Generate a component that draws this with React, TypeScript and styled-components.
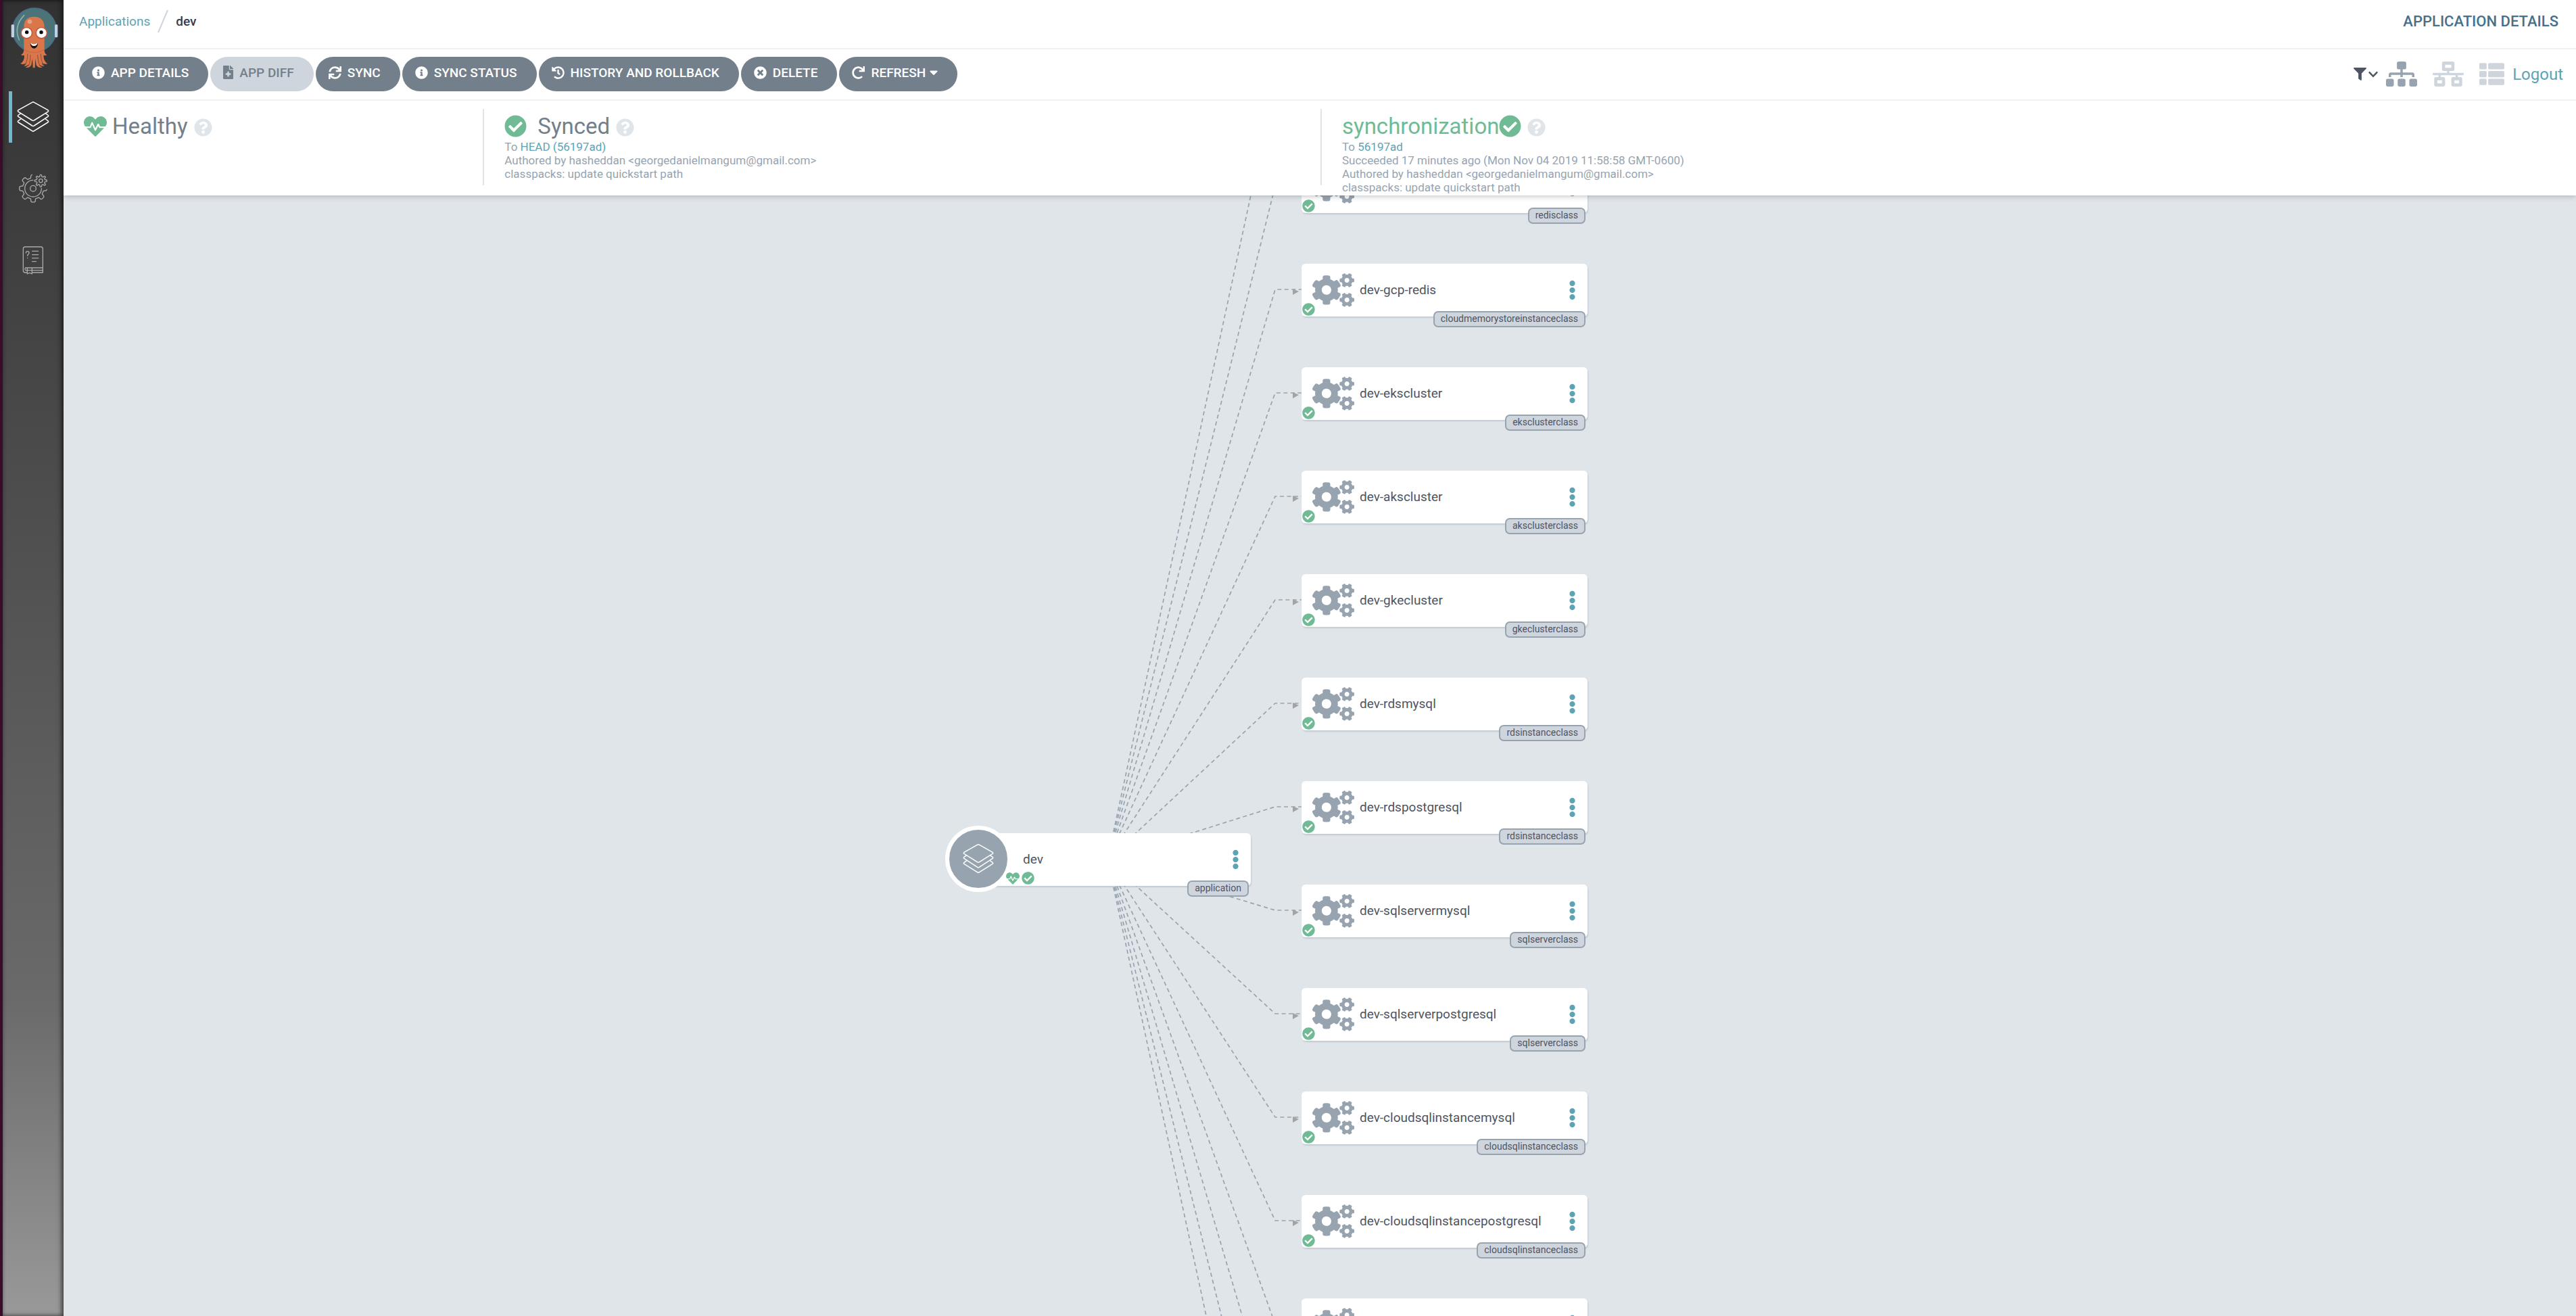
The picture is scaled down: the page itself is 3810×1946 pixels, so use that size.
import React from 'react';
import styled, { createGlobalStyle } from 'styled-components';
import {
  FaCaretDown,
  FaCheckCircle,
  FaChevronDown,
  FaCogs,
  FaEllipsisV,
  FaFileMedical,
  FaFilter,
  FaHeartbeat,
  FaHistory,
  FaInfoCircle,
  FaNetworkWired,
  FaQuestionCircle,
  FaRedo,
  FaSitemap,
  FaSync,
  FaThList,
  FaTimesCircle,
} from 'react-icons/fa';

const color = {
  ink: '#363c4a',
  text: '#4e5462',
  slate: '#73808c',
  steel: '#97a4b0',
  mist: '#ced5dc',
  canvas: '#e0e5e9',
  line: '#edf2f6',
  teal: '#5ea3b4',
  navy: '#44718e',
  green: '#70bb95',
};

const GlobalStyle = createGlobalStyle`
  *, *::before, *::after { box-sizing: border-box; }
  body {
    margin: 0;
    font-family: Roboto, "Liberation Sans", sans-serif;
    font-size: 19px;
    color: ${color.text};
    background: ${color.canvas};
  }
  a { color: ${color.teal}; text-decoration: none; }
  button { font: inherit; border: 0; padding: 0; background: none; cursor: pointer; }
  svg { display: block; flex: none; }
`;

/* ---------- shell ---------- */

const Shell = styled.div`
  display: flex;
  height: 100vh;
  overflow: hidden;
`;

const Sidebar = styled.nav`
  flex: none;
  width: 94px;
  border-left: 4px solid #3a0c29;
  background: linear-gradient(to bottom, #323232 0%, #434343 24%, #6a6a6a 76%, #999 100%);
  box-shadow: inset -3px 0 7px rgba(0, 0, 0, 0.55), inset 0 0 5px rgba(0, 0, 0, 0.25);
  display: flex;
  flex-direction: column;
  gap: 30px;
`;

const LogoBox = styled.a`
  display: flex;
  justify-content: center;
  height: 105px;
  padding: 10px 0 0 4px;
`;

const NavItem = styled.a<{ $active?: boolean }>`
  display: flex;
  align-items: center;
  justify-content: center;
  height: 76px;
  margin-left: 9px;
  padding-right: 14px;
  border-left: 5px solid ${(p) => (p.$active ? '#6fb9cf' : 'transparent')};
  color: ${(p) => (p.$active ? '#fff' : '#a9a9a9')};
`;

const Main = styled.div`
  flex: 1;
  min-width: 0;
  display: flex;
  flex-direction: column;
`;

const Glyph = styled.span<{ $w: number; $h: number }>`
  flex: none;
  display: block;
  width: ${(p) => p.$w}px;
  height: ${(p) => p.$h}px;

  svg { width: 100%; height: 100%; }
`;

/* ---------- header ---------- */

const Header = styled.header`
  position: relative;
  z-index: 2;
  background: #fff;
  box-shadow: 0 1px 8px rgba(60, 75, 85, 0.35);
`;

const TopBar = styled.div`
  display: flex;
  align-items: center;
  justify-content: space-between;
  height: 73px;
  padding: 0 26px 8px 23px;
  border-bottom: 2px solid ${color.line};
`;

const Breadcrumbs = styled.div`
  display: flex;
  align-items: center;
  gap: 11px;
  line-height: 24px;
`;

const Current = styled.span`
  font-weight: 500;
  color: ${color.ink};
`;

const PageTitle = styled.h1`
  margin: 0;
  font-size: 22px;
  line-height: 24px;
  font-weight: 500;
  color: ${color.navy};
  text-transform: uppercase;
`;

const Toolbar = styled.div`
  display: flex;
  align-items: center;
  justify-content: space-between;
  height: 76px;
  padding: 0 19px 1px 23px;
  border-bottom: 2px solid ${color.line};
`;

const Actions = styled.div`
  display: flex;
  gap: 3px;
`;

const ActionButton = styled.button`
  display: flex;
  align-items: center;
  gap: 9px;
  height: 51px;
  padding: 0 29px 5px 19px;
  border-radius: 26px;
  background: ${color.slate};
  color: #fff;
  font-weight: 500;
  white-space: nowrap;

  &:disabled {
    background: ${color.mist};
    color: ${color.slate};
  }
`;

const WithCaret = styled.span`
  display: flex;
  align-items: center;
  gap: 6px;
`;

const Views = styled.div`
  display: flex;
  align-items: center;
`;

const FilterButton = styled.button`
  display: flex;
  align-items: center;
  gap: 2px;
  margin-right: 11px;
  color: ${color.text};
`;

const ViewButton = styled.button<{ $active?: boolean; $gap: number }>`
  margin-right: ${(p) => p.$gap}px;
  color: ${(p) => (p.$active ? color.steel : color.mist)};
`;

const Logout = styled.a`
  font-size: 24px;
  line-height: 28px;
`;

const StatusBar = styled.div`
  display: grid;
  grid-template-columns: 1fr 2fr 3fr;
  padding: 12px 0 15px;
`;

const StatusColumn = styled.section<{ $divided?: boolean }>`
  height: 113px;
  padding: 5px 30px 0;
  margin-left: ${(p) => (p.$divided ? 1 : 0)}px;
  border-left: ${(p) => (p.$divided ? `2px solid ${color.canvas}` : '0')};
  font-size: 17px;
  line-height: 20px;
  color: ${color.steel};
  white-space: nowrap;
`;

const StatusTitle = styled.h2<{ $tone?: 'good' }>`
  display: flex;
  align-items: center;
  margin: 0;
  height: 41px;
  font-size: 33px;
  line-height: 41px;
  font-weight: 400;
  color: ${(p) => (p.$tone === 'good' ? color.green : color.slate)};
`;

const Good = styled.span<{ $gap: number }>`
  margin-right: ${(p) => p.$gap}px;
  color: ${color.green};
`;

const Help = styled.button`
  margin: 4px 0 0 9px;
  color: ${color.canvas};
`;

/* ---------- resource tree ---------- */

const Canvas = styled.main`
  position: relative;
  flex: 1;
  min-height: 0;
  overflow: hidden;
`;

const Edges = styled.svg`
  position: absolute;
  inset: 0;
  width: 100%;
  height: 100%;
`;

const Node = styled.article`
  position: absolute;
  width: 423px;
  height: 78px;
  display: flex;
  align-items: center;
  padding: 0 17px 0 16px;
  border-radius: 6px;
  background: #fff;
  box-shadow: 1px 2px 2px rgba(150, 165, 178, 0.4);
`;

const NodeName = styled.span<{ $indent: number }>`
  flex: 1;
  padding-left: ${(p) => p.$indent}px;
  line-height: 24px;
  white-space: nowrap;
`;

const Marks = styled.span<{ $left: number }>`
  position: absolute;
  left: ${(p) => p.$left}px;
  bottom: 1px;
  display: flex;
  gap: 3px;
  color: ${color.green};
`;

const Kind = styled.span`
  position: absolute;
  right: 3px;
  bottom: -16px;
  height: 24px;
  padding: 0 9px;
  border: 2px solid ${color.steel};
  border-radius: 7px;
  background: ${color.mist};
  font-size: 14px;
  line-height: 19px;
`;

const MenuButton = styled.button`
  color: ${color.teal};
`;

const Disc = styled.span`
  position: absolute;
  left: -29px;
  top: -11px;
  width: 98px;
  height: 98px;
  display: flex;
  align-items: center;
  justify-content: center;
  border: 6px solid #fff;
  border-radius: 50%;
  background: ${color.steel};
  color: #fff;
`;

/* ---------- drawings ---------- */

const LayersIcon = ({ size }: { size: number }) => (
  <svg width={size} height={size} viewBox="75 450 144 144" fill="none" stroke="currentColor" strokeWidth="4.5" strokeLinejoin="round" strokeLinecap="round">
    <path d="M143 457q4-3 8 0L212 491q6 4 0 8L151 537q-4 3-8 0L82 499q-6-4 0-8Z" />
    <path d="M92 506L82 513q-6 4 0 8L143 561q4 3 8 0L212 521q6-4 0-8L202 506" />
    <path d="M92 531L82 538q-6 4 0 8L143 584q4 3 8 0L212 546q6-4 0-8L202 531" />
  </svg>
);

const gear = (cx: number, cy: number, root: number, tip: number, teeth: number, from: number, to: number) => {
  const step = (Math.PI * 2) / teeth;
  const at = (r: number, a: number) => `${(cx + r * Math.cos(a)).toFixed(1)} ${(cy + r * Math.sin(a)).toFixed(1)}`;
  const points: string[] = [];
  for (let i = from; i <= to; i++) {
    const a = i * step;
    if (i !== from) points.push(at(root, a - step * 0.3), at(tip - 2, a - step * 0.2), at(tip, a - step * 0.1));
    if (i !== to) points.push(at(tip, a + step * 0.1), at(tip - 2, a + step * 0.2), at(root, a + step * 0.3));
  }
  return `M${points.join('L')}`;
};

const GearsIcon = () => (
  <svg width="44" height="44" viewBox="81 773 132 132" fill="none" stroke="currentColor" strokeWidth="4" strokeLinejoin="round" strokeLinecap="round">
    <path d={gear(147, 838, 47, 61, 8, 0, 6)} />
    <path d="M147 801A37 37 0 1 0 184 838" />
    <circle cx="147" cy="838" r="13" />
    <path d={`${gear(181, 804, 19, 27, 8, 0, 8)}Z`} />
    <circle cx="181" cy="804" r="8" />
  </svg>
);

const BookIcon = () => (
  <svg width="34" height="44" viewBox="99 1090 102 132" fill="none" stroke="currentColor" strokeWidth="4" strokeLinejoin="round" strokeLinecap="round">
    <path d="M124 1210H114q-8 0-8-9V1105q0-9 9-9H184q9 0 9 9V1210H146" />
    <path d="M193 1189H117q-3 0-3 5t3 6H193M146 1200H190M124 1191V1216L134 1211L145 1216V1191" />
    <path d="M146 1115H173M146 1131H173M146 1146H173M146 1161H163" />
    <path d="M118 1123q0-7 7-7t7 7q0 5-7 9v4M125 1145v1" />
  </svg>
);

const Mascot = () => (
  <svg width="72" height="92" viewBox="44 31 216 276">
    <circle cx="152" cy="134" r="97" fill="#4b7378" stroke="#4a6c8a" strokeWidth="4" />
    <path d="M106 69Q58 118 84 178" fill="none" stroke="#8fb0ae" strokeWidth="5" strokeLinecap="round" />
    <rect x="49" y="110" width="13" height="57" rx="4" fill="#c0d0e6" />
    <rect x="242" y="110" width="13" height="57" rx="4" fill="#c0d0e6" />
    <path
      fill="#d9774b"
      d="M105 122Q105 75 150 75T196 122V215Q194 240 208 245Q200 249 192 246Q192 272 210 284Q198 288 184 280Q186 290 196 294Q184 298 173 286Q176 296 187 300Q168 304 160 290L156 262L154 302H145L143 262L138 290Q130 304 112 300Q124 296 126 286Q116 298 104 293Q114 290 116 280Q102 290 90 283Q108 272 107 246Q99 249 92 244Q106 240 105 215Z"
    />
    <path d="M105 220Q150 248 196 220" fill="none" stroke="#c66a45" strokeWidth="4" />
    <path d="M121 240Q122 270 110 288M134 244Q134 276 126 294M166 244Q168 276 176 294M180 240Q180 270 192 288" fill="none" stroke="#8f4a35" strokeWidth="3" />
    <circle cx="131" cy="97" r="10" fill="#e6a184" />
    <circle cx="117" cy="147" r="27" fill="#c8573b" />
    <circle cx="183" cy="147" r="27" fill="#c8573b" />
    <circle cx="117" cy="147" r="22" fill="#fff" />
    <circle cx="183" cy="147" r="22" fill="#fff" />
    <circle cx="118" cy="144" r="8" fill="#000" />
    <circle cx="182" cy="144" r="8" fill="#000" />
    <path d="M133 191Q150 203 167 191Q166 216 150 216T133 191Z" fill="#1d0f0c" />
    <path d="M134 191Q150 203 166 191Q163 205 150 205T134 191Z" fill="#fff" />
  </svg>
);

const Slash = () => (
  <svg width="16" height="36" viewBox="0 0 16 36" stroke={color.mist} strokeWidth="2">
    <path d="M1 34L15 1" />
  </svg>
);

/* ---------- data ---------- */

// The first and last rows are only partly in view, so parts of them may be missing.
const resources: { name?: string; kind?: string }[] = [
  { kind: 'redisclass' },
  { name: 'dev-gcp-redis', kind: 'cloudmemorystoreinstanceclass' },
  { name: 'dev-ekscluster', kind: 'eksclusterclass' },
  { name: 'dev-akscluster', kind: 'aksclusterclass' },
  { name: 'dev-gkecluster', kind: 'gkeclusterclass' },
  { name: 'dev-rdsmysql', kind: 'rdsinstanceclass' },
  { name: 'dev-rdspostgresql', kind: 'rdsinstanceclass' },
  { name: 'dev-sqlservermysql', kind: 'sqlserverclass' },
  { name: 'dev-sqlserverpostgresql', kind: 'sqlserverclass' },
  { name: 'dev-cloudsqlinstancemysql', kind: 'cloudsqlinstanceclass' },
  { name: 'dev-cloudsqlinstancepostgresql', kind: 'cloudsqlinstanceclass' },
  {},
];

// Canvas coordinates: the tree is scrolled, so the first row starts above the edge.
const ROW = 153;
const FIRST_ROW = -52;
const COLUMN = 1831;
const ROOT = { x: 1333, y: 943 };
const rowTop = (i: number) => FIRST_ROW + i * ROW;
const edgeRows = Array.from({ length: 16 }, (_, i) => i - 1);

export default function App() {
  return (
    <>
      <GlobalStyle />
      <Shell>
        <Sidebar aria-label="Main">
          <LogoBox href="#home" aria-label="Argo">
            <Mascot />
          </LogoBox>
          <NavItem href="#applications" aria-label="Applications" $active>
            <LayersIcon size={48} />
          </NavItem>
          <NavItem href="#settings" aria-label="Settings">
            <GearsIcon />
          </NavItem>
          <NavItem href="#help" aria-label="Documentation">
            <BookIcon />
          </NavItem>
        </Sidebar>

        <Main>
          <Header>
            <TopBar>
              <Breadcrumbs>
                <a href="#applications">Applications</a>
                <Slash />
                <Current>dev</Current>
              </Breadcrumbs>
              <PageTitle>Application Details</PageTitle>
            </TopBar>

            <Toolbar>
              <Actions>
                <ActionButton><FaInfoCircle size={19} />APP DETAILS</ActionButton>
                <ActionButton disabled><Glyph $w={15} $h={20}><FaFileMedical /></Glyph>APP DIFF</ActionButton>
                <ActionButton><FaSync size={19} />SYNC</ActionButton>
                <ActionButton><FaInfoCircle size={19} />SYNC STATUS</ActionButton>
                <ActionButton><FaHistory size={19} />HISTORY AND ROLLBACK</ActionButton>
                <ActionButton><FaTimesCircle size={19} />DELETE</ActionButton>
                <ActionButton>
                  <FaRedo size={19} />
                  <WithCaret>REFRESH<Glyph $w={12} $h={20}><FaCaretDown /></Glyph></WithCaret>
                </ActionButton>
              </Actions>
              <Views>
                <FilterButton aria-label="Filter">
                  <FaFilter size={19} />
                  <FaChevronDown size={16} />
                </FilterButton>
                <ViewButton $active $gap={23} aria-label="Tree view"><Glyph $w={46} $h={37}><FaSitemap /></Glyph></ViewButton>
                <ViewButton $gap={23} aria-label="Network view"><Glyph $w={46} $h={37}><FaNetworkWired /></Glyph></ViewButton>
                <ViewButton $gap={12} aria-label="List view"><FaThList size={37} /></ViewButton>
                <Logout href="#logout">Logout</Logout>
              </Views>
            </Toolbar>

            <StatusBar>
              <StatusColumn>
                <StatusTitle>
                  <Good $gap={8}><FaHeartbeat size={34} /></Good>
                  <span>Healthy</span>
                  <Help aria-label="About health"><FaQuestionCircle size={27} /></Help>
                </StatusTitle>
              </StatusColumn>
              <StatusColumn $divided>
                <StatusTitle>
                  <Good $gap={16}><FaCheckCircle size={33} /></Good>
                  <span>Synced</span>
                  <Help aria-label="About sync"><FaQuestionCircle size={27} /></Help>
                </StatusTitle>
                <div>To <a href="#head">HEAD (56197ad)</a></div>
                <div>Authored by hasheddan &lt;georgedanielmangum@gmail.com&gt;</div>
                <div>classpacks: update quickstart path</div>
              </StatusColumn>
              <StatusColumn $divided>
                <StatusTitle $tone="good">
                  <span>synchronization</span>
                  <FaCheckCircle size={33} />
                  <Help aria-label="About the last operation"><FaQuestionCircle size={27} /></Help>
                </StatusTitle>
                <div>To <a href="#revision">56197ad</a></div>
                <div>Succeeded 17 minutes ago (Mon Nov 04 2019 11:58:58 GMT-0600)</div>
                <div>Authored by hasheddan &lt;georgedanielmangum@gmail.com&gt;</div>
                <div>classpacks: update quickstart path</div>
              </StatusColumn>
            </StatusBar>
          </Header>

          <Canvas>
            <Edges aria-hidden="true">
              {edgeRows.map((i) => {
                const y = rowTop(i) + 38;
                return (
                  <g key={i}>
                    <path
                      d={`M${ROOT.x + 211} ${ROOT.y + 39}L${COLUMN - 39} ${y}H${COLUMN}`}
                      fill="none"
                      stroke={color.steel}
                      strokeWidth="1.7"
                      strokeDasharray="6 4.5"
                    />
                    <path d={`M${COLUMN - 13} ${y - 1}l9 4l-9 5Z`} fill="#a3a3a3" />
                  </g>
                );
              })}
            </Edges>

            <Node style={{ left: ROOT.x, top: ROOT.y }}>
              <Disc><LayersIcon size={46} /></Disc>
              <NodeName $indent={70}>dev</NodeName>
              <MenuButton aria-label="dev menu"><Glyph $w={11} $h={30}><FaEllipsisV /></Glyph></MenuButton>
              <Marks $left={61}><FaHeartbeat size={20} /><FaCheckCircle size={19} /></Marks>
              <Kind>application</Kind>
            </Node>

            {resources.map((r, i) => (
              <Node key={i} style={{ left: COLUMN, top: rowTop(i) }}>
                <Glyph $w={62} $h={50}><FaCogs color={color.steel} /></Glyph>
                <NodeName $indent={8}>{r.name}</NodeName>
                <MenuButton aria-label="Resource menu"><Glyph $w={11} $h={30}><FaEllipsisV /></Glyph></MenuButton>
                <Marks $left={1}><FaCheckCircle size={19} /></Marks>
                {r.kind && <Kind>{r.kind}</Kind>}
              </Node>
            ))}
          </Canvas>
        </Main>
      </Shell>
    </>
  );
}
